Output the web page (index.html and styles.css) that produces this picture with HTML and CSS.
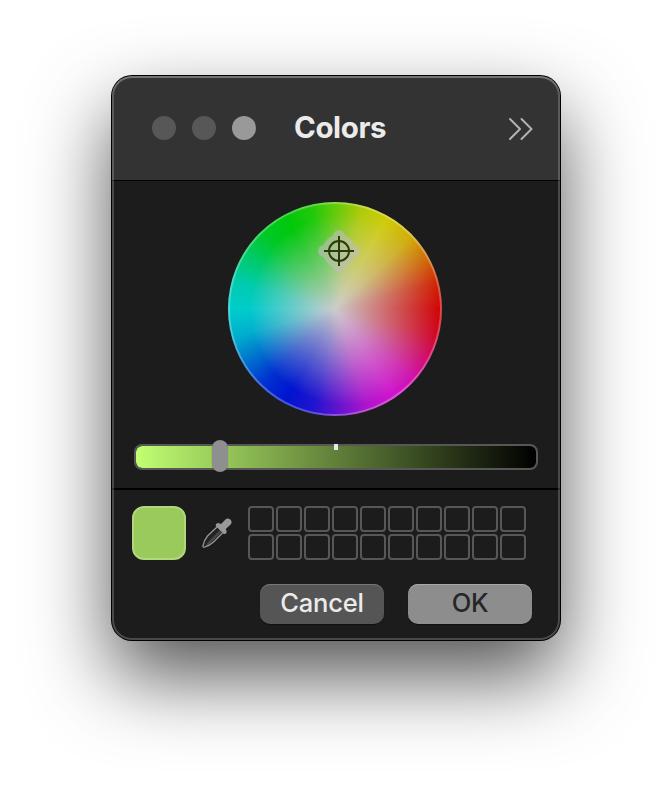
FILE: index.html
```
<!DOCTYPE html>
<html lang="en">
<head>
<meta charset="utf-8">
<title>Colors</title>
<link rel="stylesheet" href="styles.css">
</head>
<body>
<main class="window">
  <header class="titlebar">
    <div class="lights"><span class="light"></span><span class="light"></span><span class="light light-active"></span></div>
    <h1 class="title">Colors</h1>
    <svg class="more" width="26" height="24" viewBox="0 0 26 24"><path d="M2 2 12 12 2 22M13.500 2 23.500 12 13.500 22"/></svg>
  </header>
  <section class="picker">
    <div class="wheel">
      <svg class="wheel-art" width="214" height="214" viewBox="0 0 214 214">
        <defs>
          <radialGradient id="white" gradientUnits="userSpaceOnUse" cx="118" cy="107" r="96" fx="107" fy="107">
            <stop offset="0" stop-color="#ccc"/>
            <stop offset="1" stop-color="#ccc" stop-opacity="0"/>
          </radialGradient>
        </defs>
        <circle cx="107" cy="107" r="107" fill="url(#white)"/>
        <circle class="rim" cx="107" cy="107" r="106"/>
        <g class="halo">
          <circle cx="111" cy="49" r="16.500"/>
          <path d="M96 49h30M111 34v30"/>
        </g>
        <g class="target">
          <circle cx="111" cy="49" r="10"/>
          <path d="M96 49h30M111 34v30"/>
        </g>
      </svg>
    </div>
    <div class="slider"><span class="tick"></span><span class="thumb"></span></div>
  </section>
  <section class="tray">
    <div class="swatches">
      <div class="current"></div>
      <svg class="dropper" width="30" height="30" viewBox="0 0 30 30">
        <path class="glass" d="M15.500 8.500 5.500 18C3 21 1.600 24.500 .8 28.200Q1 29.400 2.200 29.200C6 28 9 26.500 11.500 24L21.500 14"/>
        <path class="glass-core" d="M18.500 11.500 9 21Q5 25 3.500 27.500Q8 26 11 22.500L20 13.500Z"/>
        <path class="bulb" d="M19 6 23.500 1.500Q25.500-.5 28.300 1.600Q30.700 4 28.700 6.500L23.700 11 24.700 13.500Q24.500 16.500 21.800 16L13.800 8Q13.300 5.300 16 5Z"/>
      </svg>
      <div class="cells">
        <i></i><i></i><i></i><i></i><i></i><i></i><i></i><i></i><i></i><i></i>
        <i></i><i></i><i></i><i></i><i></i><i></i><i></i><i></i><i></i><i></i>
      </div>
    </div>
    <div class="actions">
      <button class="btn btn-cancel">Cancel</button>
      <button class="btn btn-ok">OK</button>
    </div>
  </section>
</main>
</body>
</html>
```
FILE: styles.css
```
* { box-sizing: border-box; }
body {
  margin: 0;
  padding: 76px 112px;
  height: 788px;
  overflow: hidden;
  background: #fff;
  font-family: Inter, "Liberation Sans", sans-serif;
}
.window {
  position: relative;
  width: 448px;
  height: 564px;
  border-radius: 20px;
  background: #1c1c1c;
  box-shadow: 0 0 0 1px #000, 0 36px 80px rgba(0, 0, 0, .68);
}
/* light inner edge, drawn over the section backgrounds */
.window::after {
  content: "";
  position: absolute;
  inset: 0;
  border-radius: 20px;
  box-shadow: inset 0 0 0 2px rgba(255, 255, 255, .2), inset 0 2px 0 rgba(255, 255, 255, .15);
  pointer-events: none;
}
.titlebar {
  display: flex;
  align-items: center;
  height: 105px;
  padding: 0 26px 0 40px;
  border-bottom: 1px solid #000;
  border-radius: 20px 20px 0 0;
  background: #333;
}
.lights { display: flex; gap: 16px; }
.light { width: 24px; height: 24px; border-radius: 50%; background: #575757; }
.light-active { background: #999; }
.title {
  margin: -2px 0 0 38px;
  font-size: 29.500px;
  font-weight: 700;
  line-height: 36px;
  letter-spacing: -.4px;
  color: #ebebeb;
}
.more {
  margin: 2px 0 0 auto;
  fill: none;
  stroke: #b3b3b3;
  stroke-width: 2;
  stroke-linecap: round;
  stroke-linejoin: round;
}
.picker {
  height: 309px;
  padding: 21px 22px 0;
  border-bottom: 2px solid #000;
}
/* hue circle, eased between the six primaries */
.wheel {
  width: 214px;
  height: 214px;
  margin-left: 94px;
  border-radius: 50%;
  background: conic-gradient(from 90deg,
    rgb(208, 0, 0) 0deg, rgb(208, 3, 32) 14deg, rgb(208, 10, 104) 28deg, rgb(208, 17, 173) 42deg,
    rgb(208, 20, 205) 56deg, rgb(176, 20, 205) 71.5deg, rgb(104, 20, 206) 87deg, rgb(32, 20, 207) 102.5deg,
    rgb(0, 20, 208) 118deg, rgb(0, 49, 208) 133.5deg, rgb(0, 112, 206) 149deg, rgb(0, 175, 205) 164.5deg,
    rgb(0, 204, 204) 180deg, rgb(0, 203, 174) 195.5deg, rgb(0, 202, 107) 211deg, rgb(0, 201, 40) 226.5deg,
    rgb(0, 200, 10) 242deg, rgb(32, 201, 10) 256.5deg, rgb(104, 202, 10) 271deg, rgb(176, 204, 10) 285.5deg,
    rgb(208, 204, 10) 300deg, rgb(208, 172, 8) 317deg, rgb(208, 102, 5) 332deg, rgb(208, 32, 2) 346deg,
    rgb(208, 0, 0) 360deg);
}
.wheel-art { display: block; }
.rim { fill: none; stroke: rgba(255, 255, 255, .28); stroke-width: 2; }
.halo { fill: #bebebe; stroke: #bebebe; stroke-width: 12; stroke-linecap: round; opacity: .6; }
.halo circle { stroke: none; }
.target { fill: none; stroke: #2b3b08; stroke-width: 2; }
.slider {
  position: relative;
  height: 26px;
  margin-top: 28px;
  border: 2px solid #575757;
  border-radius: 8px;
  background: linear-gradient(90deg, #c1ff72, #000) padding-box;
}
.tick { position: absolute; left: 198px; top: -2px; width: 4px; height: 6px; background: #e8e8e8; }
.thumb {
  position: absolute;
  left: 76px;
  top: -6px;
  width: 16px;
  height: 32px;
  border-radius: 8px;
  background: #8f8f8f;
  box-shadow: 0 0 1px rgba(0, 0, 0, .4);
}
.tray { padding: 16px 28px 0 20px; }
.swatches { display: flex; align-items: center; height: 54px; }
.current {
  width: 54px;
  height: 54px;
  border: 2px solid #b0d77d;
  border-radius: 12px;
  background: #9bca5c;
}
.dropper { margin-left: 16px; }
.glass { fill: #222; stroke: #999; stroke-width: 1.200; }
.glass-core { fill: #484848; }
.bulb { fill: #999; }
.cells {
  display: grid;
  grid-template-columns: repeat(10, 26px);
  grid-auto-rows: 26px;
  gap: 2px;
  margin-left: 16px;
}
.cells i { border: 2px solid #575757; border-radius: 4px; }
.actions { display: flex; justify-content: flex-end; gap: 24px; margin-top: 24px; }
.btn {
  width: 124px;
  height: 40px;
  padding: 0 0 2px;
  border: 0;
  border-radius: 10px;
  font: 450 25.500px/36px Inter, "Liberation Sans", sans-serif;
  letter-spacing: -.2px;
}
.btn-cancel { background: #555; color: #ebebeb; box-shadow: inset 0 1px 0 #777, 0 1px 1px #111; }
.btn-ok { background: #8d8d8d; color: #262626; box-shadow: inset 0 1px 0 #a8a8a8, 0 1px 1px #111; }
```
